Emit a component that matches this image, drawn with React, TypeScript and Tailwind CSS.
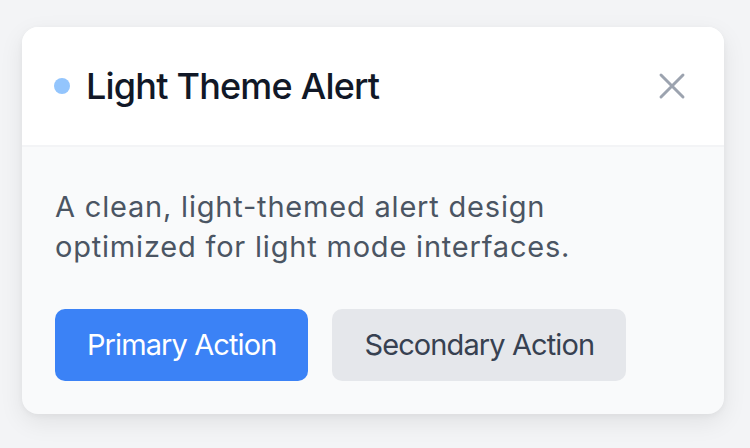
function CloseIcon() {
  return (
    <svg viewBox="0 0 24 24" className="w-11 h-11" fill="none" stroke="currentColor" strokeWidth={1.6} strokeLinecap="round">
      <path d="M6 18 18 6M6 6l12 12" />
    </svg>
  );
}

export default function App() {
  return (
    <div className="min-h-[448px] w-[750px] bg-[#f3f4f6] pt-[27px] pl-[22px] font-['Inter',sans-serif]">
      <div className="w-[702px] rounded-[16px] bg-[#f9fafb] shadow-[0_8px_24px_rgba(0,0,0,0.08),0_2px_6px_rgba(0,0,0,0.04)] overflow-hidden">
        <div className="flex items-center justify-between h-[120px] px-[32px] bg-white border-b-2 border-[#f3f4f6]">
          <div className="flex items-center gap-4">
            <span className="w-4 h-4 rounded-full bg-[#93c5fd]" />
            <h2 className="text-[36px] leading-[56px] font-medium tracking-[-0.8px] text-[#111827]">Light Theme Alert</h2>
          </div>
          <button className="text-[#9ca3af] -mr-[2px]">
            <CloseIcon />
          </button>
        </div>
        <div className="px-[33px] pt-[40px] pb-[33px]">
          <p className="text-[29px] leading-[40px] tracking-[0.8px] text-[#4b5563]">
            A clean, light-themed alert design
            <br />
            optimized for light mode interfaces.
          </p>
          <div className="flex gap-6 mt-[42px]">
            <button className="h-[72px] px-8 rounded-[10px] bg-[#3b82f6] text-white text-[29px] leading-[40px] tracking-[-0.9px]">
              Primary Action
            </button>
            <button className="h-[72px] px-8 rounded-[10px] bg-[#e5e7eb] text-[#374151] text-[29px] leading-[40px] tracking-[-0.9px]">
              Secondary Action
            </button>
          </div>
        </div>
      </div>
    </div>
  );
}
